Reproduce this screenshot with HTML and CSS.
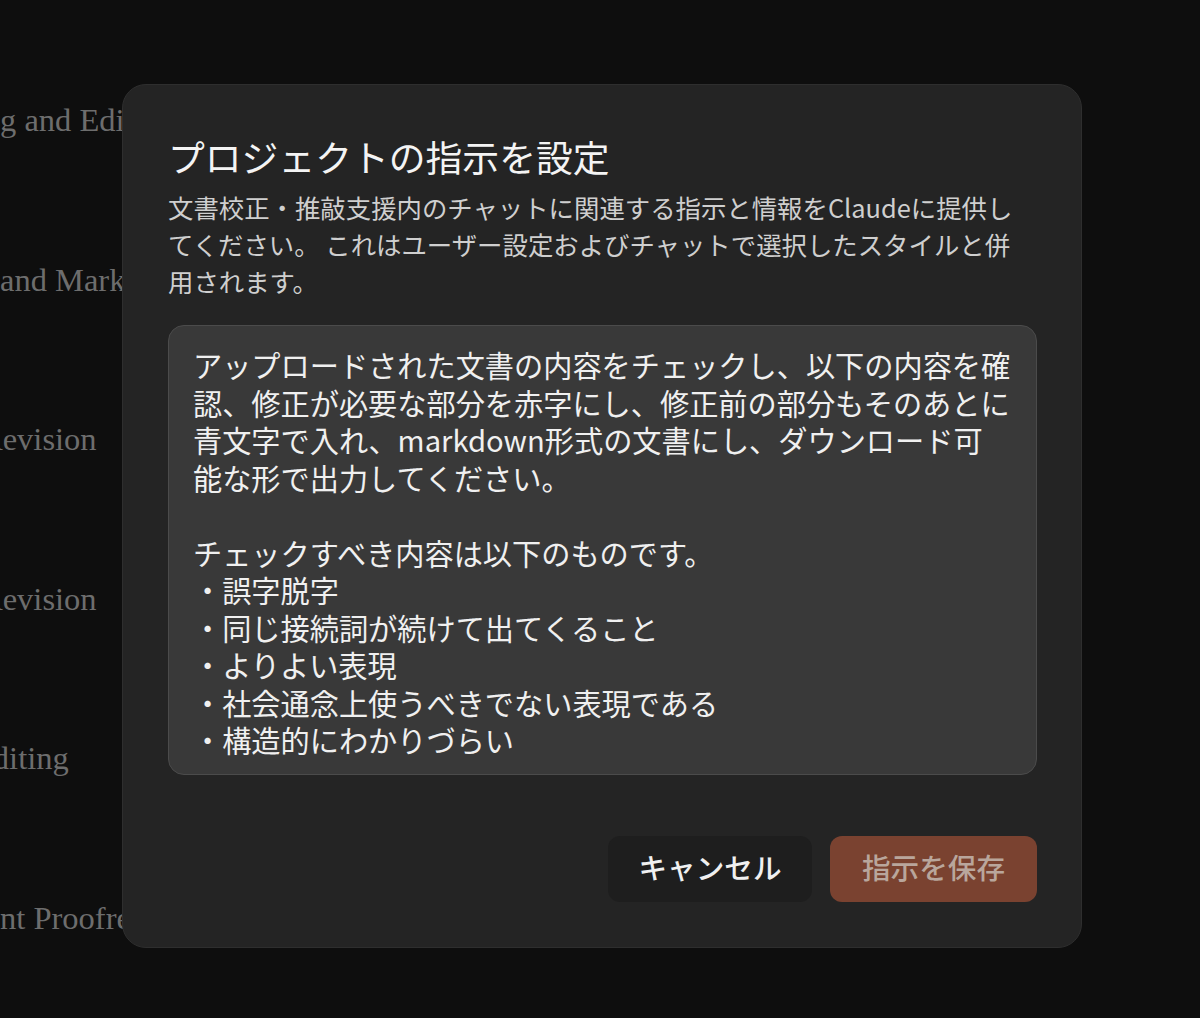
FILE: index.html
```html
<!DOCTYPE html>
<html lang="ja">
<head>
<meta charset="utf-8">
<title>プロジェクトの指示を設定</title>
<link rel="stylesheet" href="styles.css">
</head>
<body>
<div class="backdrop">
  <div class="bg-item">g and Editing</div>
  <div class="bg-item">and Markdown</div>
  <div class="bg-item cut">Revision</div>
  <div class="bg-item cut">Revision</div>
  <div class="bg-item cut-d">Editing</div>
  <div class="bg-item">nt Proofreading</div>
</div>
<div class="modal" role="dialog">
  <h2 class="title">プロジェクトの指示を設定</h2>
  <p class="desc">文書校正・推敲支援内のチャットに関連する指示と情報をClaudeに提供し<br>てください。 これはユーザー設定およびチャットで選択したスタイルと併<br>用されます。</p>
  <div class="textarea" role="textbox">アップロードされた文書の内容をチェックし、以下の内容を確<br>認、修正が必要な部分を赤字にし、修正前の部分もそのあとに<br>青文字で入れ、markdown形式の文書にし、ダウンロード可<br>能な形で出力してください。<br><br>チェックすべき内容は以下のものです。<br>・誤字脱字<br>・同じ接続詞が続けて出てくること<br>・よりよい表現<br>・社会通念上使うべきでない表現である<br>・構造的にわかりづらい</div>
  <div class="actions">
    <button class="btn btn-cancel">キャンセル</button>
    <button class="btn btn-save">指示を保存</button>
  </div>
</div>
</body>
</html>
```

FILE: styles.css
```css
html, body {
  margin: 0;
  padding: 0;
}
body {
  width: 1200px;
  height: 1018px;
  overflow: hidden;
  background: #0e0e0e;
  position: relative;
  font-family: "Noto Sans CJK JP", "Noto Sans", sans-serif;
}
.backdrop {
  display: flex;
  flex-direction: column;
  gap: 119.5px;
  padding-top: 100px;
}
.bg-item {
  font-family: "Liberation Serif", serif;
  font-size: 32.5px;
  line-height: 40px;
  height: 40px;
  color: #6d6d6d;
  white-space: nowrap;
}
.bg-item.cut {
  margin-left: -19px;
}
.bg-item.cut-d {
  margin-left: -27px;
}
.modal {
  position: absolute;
  left: 122px;
  top: 84px;
  width: 960px;
  height: 864px;
  box-sizing: border-box;
  padding: 46px 44px 45px 45px;
  background: #242424;
  border: 1px solid #2e2e2e;
  border-radius: 24px;
  display: flex;
  flex-direction: column;
}
.title {
  margin: 0;
  font-size: 36.8px;
  line-height: 50px;
  font-weight: 400;
  color: #f4f4f4;
}
.desc {
  margin: 8px 0 0;
  font-size: 25.4px;
  line-height: 37px;
  color: #cfcfcf;
  white-space: nowrap;
}
.textarea {
  margin-top: 25px;
  height: 450px;
  box-sizing: border-box;
  padding: 20px 24px 22px;
  background: #393939;
  border: 1px solid #4b4b4b;
  border-radius: 16px;
  font-size: 29.2px;
  line-height: 37.5px;
  color: #f0f0f0;
  white-space: nowrap;
  overflow: hidden;
}
.actions {
  margin-top: 61px;
  display: flex;
  justify-content: flex-end;
  gap: 18px;
}
.btn {
  height: 66px;
  border: none;
  border-radius: 12px;
  font-family: "Noto Sans CJK JP", "Noto Sans", sans-serif;
  font-size: 28.6px;
  font-weight: 500;
  padding: 0 0 5px;
}
.btn-cancel {
  width: 204px;
  background: #1e1e1e;
  color: #f0f0f0;
}
.btn-save {
  width: 207px;
  background: #7a4230;
  color: #b9a69c;
}
```
